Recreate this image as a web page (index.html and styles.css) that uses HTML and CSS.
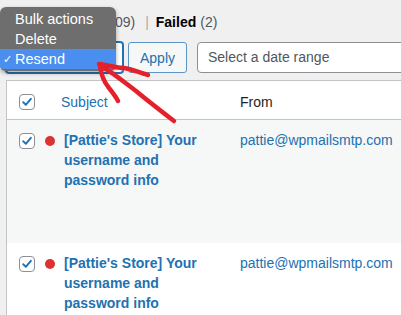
FILE: index.html
```html
<!DOCTYPE html>
<html lang="en">
<head>
<meta charset="utf-8">
<title>Email Log</title>
<link rel="stylesheet" href="styles.css">
</head>
<body>
<div class="page">
  <div class="views">
    <span class="view">All <span class="count">(109)</span></span>
    <span class="sep">|</span>
    <span class="view current">Failed</span>
    <span class="count">(2)</span>
  </div>

  <div class="controls">
    <div class="select"></div>
    <button class="btn">Apply</button>
    <div class="date">Select a date range</div>
  </div>

  <div class="table">
    <div class="row head">
      <span class="cb"><svg viewBox="0 0 16 16"><path d="M3.6 8.2 L6.6 11.2 L12.4 4.4"/></svg></span>
      <span class="h-subject">Subject</span>
      <span class="h-from">From</span>
    </div>
    <div class="row item alt">
      <span class="cb"><svg viewBox="0 0 16 16"><path d="M3.6 8.2 L6.6 11.2 L12.4 4.4"/></svg></span>
      <span class="dot"></span>
      <span class="subject">[Pattie's Store] Your username and password info</span>
      <span class="from">pattie@wpmailsmtp.com</span>
    </div>
    <div class="row item">
      <span class="cb"><svg viewBox="0 0 16 16"><path d="M3.6 8.2 L6.6 11.2 L12.4 4.4"/></svg></span>
      <span class="dot"></span>
      <span class="subject">[Pattie's Store] Your username and password info</span>
      <span class="from">pattie@wpmailsmtp.com</span>
    </div>
  </div>

  <ul class="menu">
    <li class="menu-item">Bulk actions</li>
    <li class="menu-item">Delete</li>
    <li class="menu-item active"><span class="tick">✓</span>Resend</li>
  </ul>

  <svg class="arrow" viewBox="0 0 401 315" width="401" height="315">
    <path d="M99 64 C108 65 116 68 124 68 C132 69 140 73 148 75"/>
    <path d="M100 66 C101 74 104 82 109 88 C113 93 116 97 118 101"/>
    <path d="M101 66 C112 72 124 82 136 91 C148 101 161 111 174 121"/>
  </svg>
</div>
</body>
</html>
```

FILE: styles.css
```css
* { box-sizing: border-box; }

html, body {
  margin: 0;
  padding: 0;
}

body {
  width: 401px;
  height: 315px;
  overflow: hidden;
  background: #f0f0f1;
  font-family: "Liberation Sans", Arial, sans-serif;
  font-size: 14px;
  color: #1d2327;
}

.page {
  position: relative;
  padding-left: 6px;
  width: 401px;
  height: 315px;
  overflow: hidden;
}

/* status views */
.views {
  display: flex;
  align-items: baseline;
  padding-top: 12px;
  padding-left: 77px;
  line-height: 20px;
  color: #50575e;
  white-space: nowrap;
}
.view { color: #50575e; }
.view.current { color: #000; font-weight: bold; margin-right: 4px; }
.sep { color: #a7aaad; margin: 0 7px 0 10px; }

/* controls */
.controls {
  display: flex;
  margin-top: 10px;
  height: 31px;
}
.controls > * { flex: none; }
.select {
  width: 117px;
  height: 31px;
  border: 1px solid #2271b1;
  box-shadow: 0 0 0 1px #2271b1;
  border-radius: 3px;
  background: #fff;
}
.btn {
  margin-left: 5px;
  width: 59px;
  height: 31px;
  border: 1px solid #5b94c7;
  border-radius: 3px;
  background: #f6f7f7;
  color: #2271b1;
  font-family: inherit;
  font-size: 14px;
  padding: 0;
}
.date {
  margin-left: 10px;
  width: 260px;
  height: 31px;
  border: 1px solid #8c8f94;
  border-radius: 4px;
  background: #fff;
  padding-left: 10px;
  line-height: 29px;
  color: #50575e;
  white-space: nowrap;
}

/* table */
.table {
  margin-top: 7px;
  width: 420px;
  border-top: 1px solid #c3c4c7;
  border-left: 1px solid #c3c4c7;
}
.row {
  display: flex;
  padding-left: 12px;
  background: #fff;
}
.head {
  height: 39px;
  align-items: center;
  padding-top: 3px;
  border-bottom: 1px solid #c3c4c7;
}
.cb {
  flex: none;
  width: 16px;
  height: 16px;
  border: 1px solid #8c8f94;
  border-radius: 4px;
  background: #fff;
  display: block;
}
.cb svg {
  display: block;
  width: 14px;
  height: 14px;
}
.cb path {
  fill: none;
  stroke: #2271b1;
  stroke-width: 2.2;
  stroke-linecap: round;
  stroke-linejoin: round;
}
.h-subject {
  margin-left: 26px;
  width: 179px;
  color: #2271b1;
}
.h-from { color: #1d2327; }

.item {
  height: 123px;
  align-items: flex-start;
  padding-top: 10px;
  line-height: 20px;
}
.item.alt { background: #f6f7f7; }
.item .cb { margin-top: 3px; }
.dot {
  flex: none;
  margin-left: 10px;
  margin-top: 6px;
  width: 10px;
  height: 10px;
  border-radius: 50%;
  background: #dc3232;
}
.subject {
  flex: none;
  margin-left: 9px;
  width: 150px;
  font-weight: bold;
  color: #2271b1;
}
.from {
  flex: none;
  margin-left: 26px;
  color: #2271b1;
  white-space: nowrap;
}

/* dropdown menu */
.menu {
  position: absolute;
  left: 0;
  top: 7px;
  width: 116px;
  margin: 0;
  padding: 2px 0;
  list-style: none;
  background: #6e6e6e;
  border-radius: 6px;
  box-shadow: 0 2px 4px rgba(0,0,0,0.35);
  overflow: hidden;
}
.menu-item {
  position: relative;
  height: 20px;
  line-height: 20px;
  padding-left: 15px;
  font-size: 14.5px;
  color: #fff;
  white-space: nowrap;
}
.menu-item.active {
  background: #4a8ff0;
}
.tick {
  position: absolute;
  left: 3px;
  top: 0;
  font-size: 11px;
}

/* annotation arrow */
.arrow {
  position: absolute;
  left: 0;
  top: 0;
  pointer-events: none;
}
.arrow path {
  fill: none;
  stroke: #e5202a;
  stroke-width: 4.5;
  stroke-linecap: round;
  stroke-linejoin: round;
}
```
